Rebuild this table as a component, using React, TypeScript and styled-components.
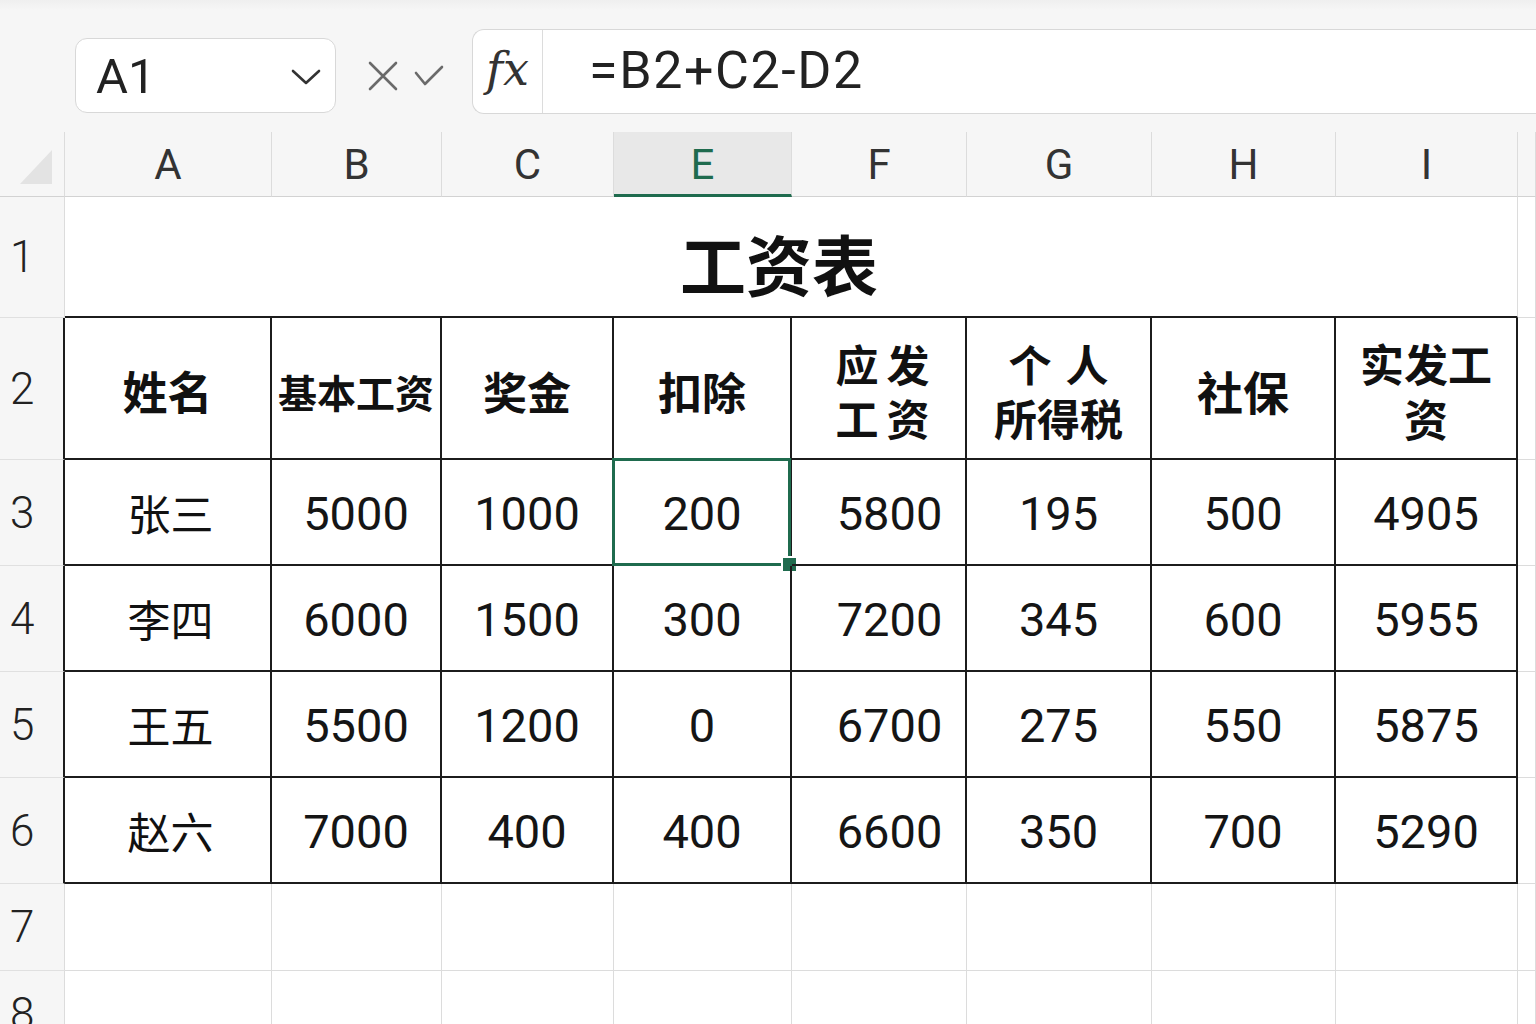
import React from 'react';
import styled, { createGlobalStyle } from 'styled-components';

const GlobalStyle = createGlobalStyle`
  html, body { margin: 0; padding: 0; background: #fff; overflow: hidden; }
  body { font-family: Roboto, "Noto Sans CJK SC", sans-serif; }
  * { box-sizing: border-box; }
`;

const LATIN = `Roboto, "Noto Sans CJK SC", sans-serif`;
const CJK = `"Noto Sans CJK SC", "Noto Sans", sans-serif`;
const GREEN = '#1f6b4e';
const LIGHT = '#dcdcdc';
const DARK = '#1c1c1c';

const Page = styled.div`
  width: 1536px;
  height: 1024px;
  overflow: hidden;
  background: #fff;
  display: flex;
  flex-direction: column;
`;

const Toolbar = styled.div`
  flex: none;
  height: 132px;
  background: linear-gradient(#efefef 0px, #f6f6f6 10px, #f6f6f6 100%);
  display: flex;
  align-items: flex-start;
  padding: 29px 0 0 75px;
`;

const NameBox = styled.div`
  margin-top: 9px;
  width: 261px;
  height: 75px;
  border: 1.5px solid #d8d8d8;
  border-radius: 12px;
  background: #fff;
  display: flex;
  align-items: center;
  justify-content: space-between;
  padding: 2px 14px 0 20px;
  font-family: ${LATIN};
  font-size: 49px;
  color: #222;
`;

const Actions = styled.div`
  margin-top: 9px;
  height: 75px;
  width: 136px;
  display: flex;
  align-items: center;
  gap: 16px;
  padding-left: 32px;
`;

const FormulaBox = styled.div`
  flex: 1;
  height: 85px;
  border: 1.5px solid #d8d8d8;
  border-right: none;
  border-radius: 12px 0 0 12px;
  background: #fff;
  display: flex;
  align-items: stretch;
`;

const FxCell = styled.div`
  width: 70px;
  flex: none;
  border-right: 1.5px solid #dcdcdc;
  display: flex;
  align-items: center;
  justify-content: center;
  font-family: "DejaVu Serif", "Liberation Serif", serif;
  font-style: italic;
  font-size: 46px;
  color: #333;
  padding-bottom: 6px;
`;

const FormulaText = styled.div`
  display: flex;
  align-items: center;
  padding-left: 46px;
  font-family: ${LATIN};
  font-size: 52px;
  letter-spacing: 1.6px;
  color: #222;
  padding-bottom: 2px;
`;

const Sheet = styled.div`
  display: grid;
  grid-template-columns: 65px 207px 170px 172px 178px 175px 185px 184px 182px 1fr;
  grid-template-rows: 65px 121px 142px repeat(4, 106px) 87px 87px;
`;

const Corner = styled.div`
  background: #f6f6f6;
  border-right: 1px solid ${LIGHT};
  border-bottom: 1px solid #d2d2d2;
  position: relative;
  &::after {
    content: '';
    position: absolute;
    left: 20px;
    top: 18px;
    width: 32px;
    height: 34px;
    background: #e3e3e3;
    clip-path: polygon(100% 0, 100% 100%, 0 100%);
  }
`;

const ColHeader = styled.div<{ $active?: boolean }>`
  background: ${(p) => (p.$active ? '#e8e8e8' : '#f6f6f6')};
  border-right: 1px solid ${LIGHT};
  border-bottom: ${(p) => (p.$active ? `3px solid ${GREEN}` : '1px solid #d2d2d2')};
  display: flex;
  align-items: center;
  justify-content: center;
  font-family: ${LATIN};
  font-size: 42px;
  color: ${(p) => (p.$active ? GREEN : '#333')};
  padding-top: ${(p) => (p.$active ? '2px' : '0')};
`;

const RowHeader = styled.div<{ $dark?: boolean }>`
  background: #f6f6f6;
  border-right: ${(p) => (p.$dark ? `2px solid ${DARK}` : `1px solid ${LIGHT}`)};
  border-bottom: 1px solid #e0e0e0;
  display: flex;
  align-items: center;
  padding-left: 10px;
  font-family: ${LATIN};
  font-weight: 300;
  font-size: 44px;
  color: #222;
`;

const TitleCell = styled.div`
  grid-column: 2 / span 8;
  border-right: 1px solid ${LIGHT};
  border-bottom: 2px solid ${DARK};
  display: flex;
  align-items: center;
  justify-content: center;
  padding: 10px 24px 0 0;
  font-family: ${CJK};
  font-weight: 700;
  font-size: 66px;
  color: #111;
`;

const Cell = styled.div<{ $table?: boolean; $shift?: number }>`
  position: relative;
  border-right: ${(p) => (p.$table ? `2px solid ${DARK}` : `1px solid ${LIGHT}`)};
  border-bottom: ${(p) => (p.$table ? `2px solid ${DARK}` : `1px solid ${LIGHT}`)};
  display: flex;
  align-items: center;
  justify-content: center;
  text-align: center;
  padding-left: ${(p) => p.$shift ?? 0}px;
  color: #111;
`;

const HeadText = styled.div<{ $size: number }>`
  font-family: ${CJK};
  font-weight: 700;
  font-size: ${(p) => p.$size}px;
  line-height: 1.25;
  white-space: nowrap;
  padding-top: 6px;
`;

const HeadLine = styled.div<{ $spacing: number }>`
  letter-spacing: ${(p) => p.$spacing}px;
  margin-right: ${(p) => -p.$spacing}px;
`;

const NameText = styled.div`
  font-family: ${CJK};
  font-weight: 400;
  font-size: 43px;
  padding-left: 6px;
`;

const NumText = styled.div`
  font-family: ${LATIN};
  font-size: 47px;
  color: #151515;
  padding-top: 2px;
`;

const Selection = styled.div`
  position: absolute;
  top: -2px;
  left: -2px;
  right: -1px;
  bottom: -2px;
  border: 3px solid ${GREEN};
  pointer-events: none;
`;

const Handle = styled.div`
  position: absolute;
  right: -8px;
  bottom: -8px;
  width: 13px;
  height: 13px;
  background: ${GREEN};
  box-shadow: 0 0 0 2px #fff;
`;

const Chevron = () => (
  <svg width="30" height="20" viewBox="0 0 30 20" fill="none">
    <path d="M2 4 L15 16 L28 4" stroke="#333" strokeWidth="2.6" strokeLinecap="round" strokeLinejoin="round" />
  </svg>
);

const Cross = () => (
  <svg width="30" height="30" viewBox="0 0 30 30" fill="none">
    <path d="M2 2 L28 28 M28 2 L2 28" stroke="#6a6a6a" strokeWidth="2.6" strokeLinecap="round" />
  </svg>
);

const Check = () => (
  <svg width="30" height="22" viewBox="0 0 30 22" fill="none">
    <path d="M2 8 L11 19 L28 2" stroke="#6a6a6a" strokeWidth="2.6" strokeLinecap="round" strokeLinejoin="round" />
  </svg>
);

const columns = ['A', 'B', 'C', 'E', 'F', 'G', 'H', 'I'];

type Line = { t: string; ls?: number };
const headers: { lines: Line[]; size: number }[] = [
  { lines: [{ t: '姓名' }], size: 45 },
  { lines: [{ t: '基本工资' }], size: 39 },
  { lines: [{ t: '奖金' }], size: 44 },
  { lines: [{ t: '扣除' }], size: 44 },
  { lines: [{ t: '应发', ls: 8 }, { t: '工资', ls: 8 }], size: 43 },
  { lines: [{ t: '个人', ls: 14 }, { t: '所得税' }], size: 43 },
  { lines: [{ t: '社保' }], size: 46 },
  { lines: [{ t: '实发工' }, { t: '资' }], size: 44 },
];

const rows: [string, ...number[]][] = [
  ['张三', 5000, 1000, 200, 5800, 195, 500, 4905],
  ['李四', 6000, 1500, 300, 7200, 345, 600, 5955],
  ['王五', 5500, 1200, 0, 6700, 275, 550, 5875],
  ['赵六', 7000, 400, 400, 6600, 350, 700, 5290],
];

export default function App() {
  return (
    <Page>
      <GlobalStyle />
      <Toolbar>
        <NameBox>
          <span>A1</span>
          <Chevron />
        </NameBox>
        <Actions>
          <Cross />
          <Check />
        </Actions>
        <FormulaBox>
          <FxCell>fx</FxCell>
          <FormulaText>=B2+C2-D2</FormulaText>
        </FormulaBox>
      </Toolbar>
      <Sheet>
        <Corner />
        {columns.map((c) => (
          <ColHeader key={c} $active={c === 'E'}>
            {c}
          </ColHeader>
        ))}
        <ColHeader />

        <RowHeader>1</RowHeader>
        <TitleCell>工资表</TitleCell>
        <Cell />

        <RowHeader $dark>2</RowHeader>
        {headers.map((h, i) => (
          <Cell key={i} $table $shift={i === 4 ? 8 : 0}>
            <HeadText $size={h.size}>
              {h.lines.map((l, j) => (
                <HeadLine key={j} $spacing={l.ls ?? 0}>
                  {l.t}
                </HeadLine>
              ))}
            </HeadText>
          </Cell>
        ))}
        <Cell />

        {rows.map((r, ri) => (
          <React.Fragment key={ri}>
            <RowHeader $dark>{ri + 3}</RowHeader>
            {r.map((v, ci) => (
              <Cell key={ci} $table $shift={ci === 4 ? 22 : 0}>
                {ci === 0 ? <NameText>{v}</NameText> : <NumText>{v}</NumText>}
                {ri === 0 && ci === 3 && (
                  <Selection>
                    <Handle />
                  </Selection>
                )}
              </Cell>
            ))}
            <Cell />
          </React.Fragment>
        ))}

        {[7, 8].map((n) => (
          <React.Fragment key={n}>
            <RowHeader>{n}</RowHeader>
            {Array.from({ length: 9 }).map((_, i) => (
              <Cell key={i} />
            ))}
          </React.Fragment>
        ))}
      </Sheet>
    </Page>
  );
}
